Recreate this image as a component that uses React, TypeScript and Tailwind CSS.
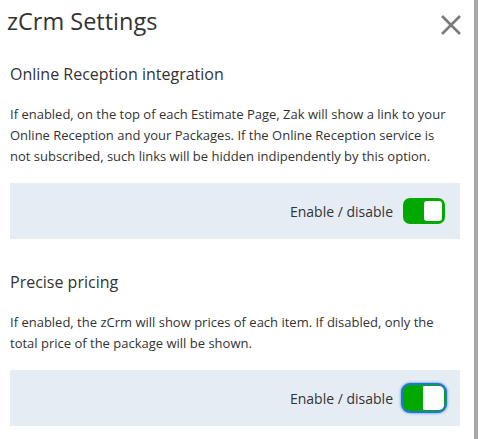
import React, { useState } from 'react';

const font = { fontFamily: '"Open Sans", "Noto Sans", sans-serif' };

const Toggle: React.FC<{ on: boolean; focused?: boolean; onClick: () => void }> = ({ on, focused, onClick }) => (
  <button
    onClick={onClick}
    className={`relative w-[42px] h-[26px] rounded-[7px] flex items-center ${
      on ? 'bg-[#00a800] justify-end' : 'bg-[#bbb] justify-start'
    } ${focused ? 'p-[1px] shadow-[0_0_3px_2px_#2a86dc] outline outline-[2px] outline-[#1f78c8]' : 'p-[3px]'}`}
  >
    <span className={`block h-full bg-white ${focused ? 'w-[21px] rounded-r-[5px] rounded-l-[1px]' : 'w-[18px] rounded-[3px]'}`} />
  </button>
);

const Section: React.FC<{ title: string; text: string; focused?: boolean }> = ({ title, text, focused }) => {
  const [on, setOn] = useState(true);
  return (
    <div>
      <h2 className="text-[16px] leading-[22px] text-[#333] px-[10px] pt-[1px]">{title}</h2>
      <p className="text-[13px] leading-[21px] text-[#333] px-[10px] mt-[19px] w-[465px]">{text}</p>
      <div className="ml-[10px] mr-[14px] mt-[16px] h-[56px] bg-[#e6ecf4] flex items-center justify-end gap-[10px] pr-[15px]">
        <span className="text-[14px] text-[#333]">Enable / disable</span>
        <Toggle on={on} focused={focused} onClick={() => setOn(!on)} />
      </div>
    </div>
  );
};

export default function App() {
  return (
    <div style={font} className="w-[478px] h-[439px] bg-white flex overflow-hidden">
      <div className="flex-1">
        <div className="flex items-start justify-between pl-[7px] pr-[12px] pt-[5px] h-[62px]">
          <h1 className="text-[23.5px] leading-[32px] text-[#333]">zCrm Settings</h1>
          <button className="mt-[9px]">
            <svg width="22" height="22" viewBox="0 0 22 22">
              <path d="M2 2L20 20M20 2L2 20" stroke="#7a7a7a" strokeWidth="2.6" />
            </svg>
          </button>
        </div>
        <Section
          title="Online Reception integration"
          text="If enabled, on the top of each Estimate Page, Zak will show a link to your Online Reception and your Packages. If the Online Reception service is not subscribed, such links will be hidden indipendently by this option."
        />
        <div className="h-[31px]" />
        <Section
          title="Precise pricing"
          text="If enabled, the zCrm will show prices of each item. If disabled, only the total price of the package will be shown."
          focused
        />
      </div>
      <div className="w-[4px] bg-[#a8a8a8]" />
    </div>
  );
}
